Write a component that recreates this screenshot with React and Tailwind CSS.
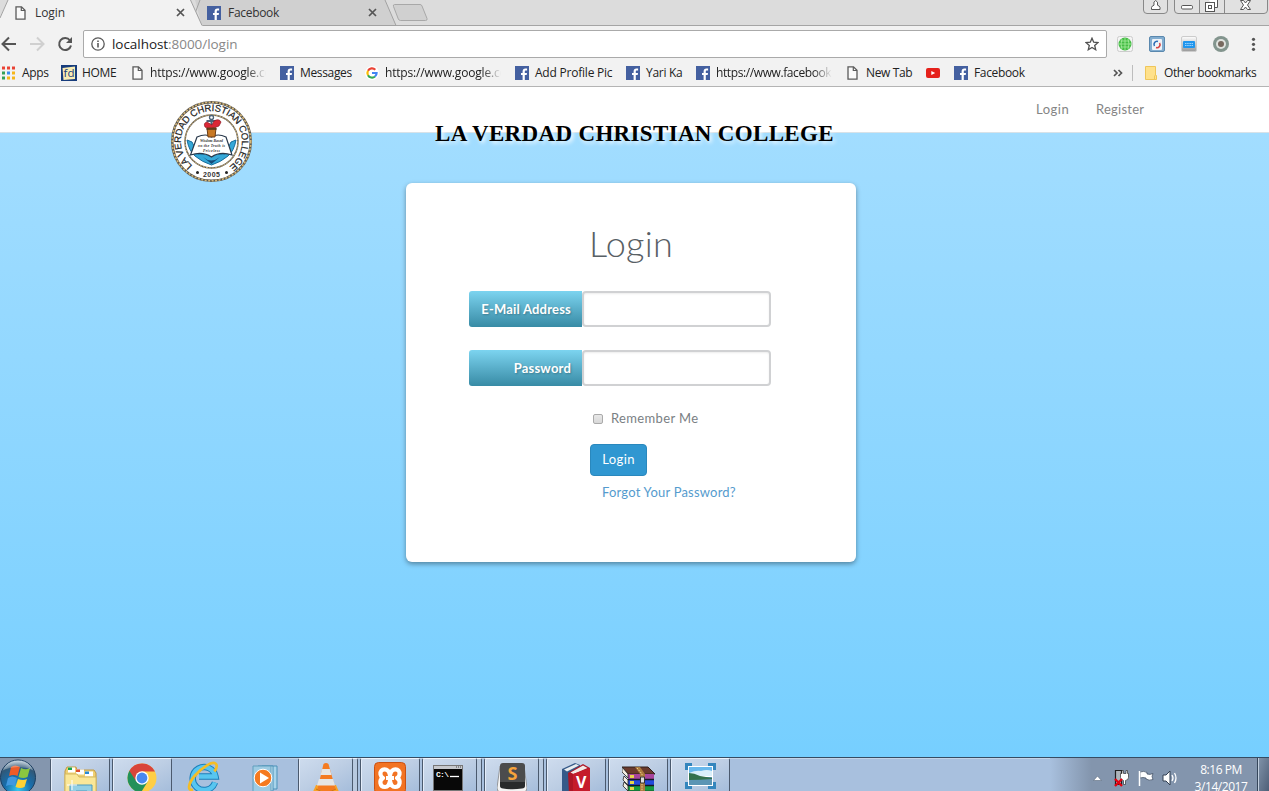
import React from "react";

const UI = "font-['Open_Sans','Noto_Sans',sans-serif]";
const WEB = "font-[Lato,'Open_Sans',sans-serif]";

function FacebookIcon() {
  return (
    <svg width="14" height="14" viewBox="0 0 14 14" className="shrink-0">
      <rect width="14" height="14" fill="#4460a0" />
      <path d="M7.6 14V8.9H6V6.9h1.6V5.4c0-1.9 1-2.9 2.8-2.9h1.7v2h-1.1c-.9 0-1.2.4-1.2 1.1v1.3H12l-.3 2H9.800V14z" fill="#fff" />
    </svg>
  );
}

function PageIcon() {
  return (
    <svg width="11" height="14" viewBox="0 0 11 14" className="shrink-0">
      <path d="M1 .8h5.500L10 4.300v8.900H1z" fill="#fafafa" stroke="#5a5a5a" strokeWidth="1.3" />
      <path d="M6.300 1v3.500H10" fill="none" stroke="#5a5a5a" strokeWidth="1.2" />
    </svg>
  );
}

function AppsIcon() {
  const colors = ["#ea4335", "#ea4335", "#ea4335", "#34a058", "#3b8df2", "#f6b619", "#34a058", "#f6b619", "#f6b619"];
  return (
    <svg width="15" height="14" viewBox="0 0 15 14" className="shrink-0">
      {colors.map((c, i) => (
        <rect key={i} x={1 + (i % 3) * 5} y={0.5 + Math.floor(i / 3) * 5} width="3" height="3" fill={c} />
      ))}
    </svg>
  );
}

function HomeIcon() {
  return (
    <svg width="16" height="16" viewBox="0 0 16 16" className="shrink-0">
      <rect width="16" height="16" fill="#173c7c" />
      <path d="M1.500 3L14 1.500v12.500L2.500 15z" fill="#f8edb4" />
      <text x="2.600" y="12.300" fontSize="11.500" fontFamily="Open Sans" fill="#173c7c" textLength="11">fd</text>
    </svg>
  );
}

function GoogleIcon() {
  return (
    <svg width="14" height="14" viewBox="0 0 14 14" className="shrink-0">
      <circle cx="7" cy="7" r="7" fill="#fff" />
      <g fill="none" strokeWidth="2.200">
        <path d="M3 4.800A4.600 4.600 0 0 1 10.300 3.700" stroke="#ea4335" />
        <path d="M3 9.200A4.600 4.600 0 0 1 3 4.800" stroke="#fbbc05" />
        <path d="M10 10.500A4.600 4.600 0 0 1 3 9.200" stroke="#34a853" />
        <path d="M7 7h4.600a4.600 4.600 0 0 1-1.600 3.500" stroke="#4285f4" />
      </g>
    </svg>
  );
}

function YoutubeIcon() {
  return (
    <svg width="14" height="10" viewBox="0 0 14 10" className="shrink-0">
      <rect width="14" height="10" rx="2" fill="#e5211b" />
      <path d="M5.300 2.900v4.200L9.200 5z" fill="#fff" />
    </svg>
  );
}

function CloseX() {
  return (
    <svg width="9" height="9" viewBox="0 0 9 9">
      <path d="M1 1l7 7M8 1L1 8" stroke="#555" strokeWidth="1.700" />
    </svg>
  );
}

function TabStrip() {
  return (
    <div className="relative flex h-[26px] bg-[#dcdcdc]">
      <svg className="absolute inset-0" width="1269" height="26" viewBox="0 0 1269 26">
        <path d="M0 25.500H1269" stroke="#a5a5a5" />
        <path d="M195 0h190l11 25.500H202z" fill="#d0d0d0" />
        <path d="M200 0l-4.500 12L202 25.500H396L385 0" fill="none" stroke="#a2a2a2" />
        <path d="M0 26V17L8 0h182.500l12 26z" fill="#f2f2f2" />
        <path d="M0 18L8 0M190.500 0L202 25.500" fill="none" stroke="#a2a2a2" />
        <path d="M394.500 4.500h25.500q1.500 0 2 1.500l5 12.500q.6 2-1.500 2h-25q-1.500 0-2.200-1.500l-4.800-12.500q-.6-2 1-2z" fill="#d0d0d0" stroke="#a8a8a8" />
        <g stroke="#888" fill="#e1e1e1">
          <path d="M1143.500 0v10q0 3.500 3.500 3.500h17q3.500 0 3.500-3.500V0" />
          <path d="M1174.500 0v10q0 3.500 3.500 3.500h86q3.500 0 3.500-3.500V0M1199.500 0v13.500M1224.500 0v13.500" />
        </g>
        <g fill="#fff" stroke="#555">
          <path d="M1151.500 9.500v-2q.5-1.800 2.500-2.300-1-3.700 1.700-4.700 2.700 1 1.800 4.700 2 .5 2.500 2.300v2z" />
          <rect x="1181.500" y="5.500" width="11" height="3.500" rx="1.200" />
          <path d="M1208.500-.5h9v8h-3" />
          <rect x="1205.500" y="2.500" width="9" height="9" />
          <rect x="1208.500" y="5.500" width="3" height="3" />
          <path d="M1240.500.5h3l2 2.500 2-2.500h3l-3 4.500 3 4.500h-3l-2-2.500-2 2.500h-3l3-4.500z" />
        </g>
      </svg>
      <div className="relative flex h-[25px] w-[206px] items-center pl-[15px]">
        <PageIcon />
        <span className="ml-[9px] w-[141px] text-[12px] tracking-[-0.1px] text-[#333]">Login</span>
        <CloseX />
      </div>
      <div className="relative flex h-[25px] w-[180px] items-center pl-[1px]">
        <FacebookIcon />
        <span className="ml-[7px] w-[140px] text-[12px] tracking-[-0.3px] text-[#333]">Facebook</span>
        <CloseX />
      </div>
    </div>
  );
}

function Toolbar() {
  return (
    <div className="flex h-[33px] items-start pt-[4px]">
      <svg width="83" height="28" viewBox="0 0 83 28" fill="none" strokeWidth="2">
        <path d="M16 14H3M9 7.500L2.500 14 9 20.500" stroke="#555" />
        <path d="M30 14H43M37 7.500l6.500 6.500L37 20.500" stroke="#d0d0d0" />
        <path d="M70 10.500A6 6 0 1 0 71 15.500" stroke="#555" />
        <path d="M72 7v6h-6z" fill="#555" />
      </svg>
      <div className="flex h-[28px] w-[1024px] items-center rounded-[2px] border border-[#aaa] bg-white pl-[7px]">
        <svg width="14" height="14" viewBox="0 0 14 14" fill="none" stroke="#5a5a5a">
          <circle cx="7" cy="7" r="6.200" strokeWidth="1.300" />
          <path d="M7 6v4.500M7 3.500v1.500" strokeWidth="1.600" />
        </svg>
        <div className="ml-[7px] w-[973px] text-[13.5px] tracking-[-0.05px] text-[#222]">
          localhost<span className="text-[#888]">:8000/login</span>
        </div>
        <svg width="14" height="14" viewBox="0 0 14 14">
          <path d="M7 1.200l1.700 4 4.300.4-3.300 2.800 1 4.300L7 10.400l-3.700 2.300 1-4.300L1 5.600l4.300-.4z" fill="none" stroke="#505050" strokeWidth="1.300" />
        </svg>
      </div>
      <svg width="162" height="28" viewBox="1107 30 162 28">
        <defs>
          <linearGradient id="gray" x1="0" y1="0" x2="0" y2="1"><stop stopColor="#fff" /><stop offset="1" stopColor="#999" /></linearGradient>
        </defs>
        <rect x="1117.500" y="36.500" width="15" height="15" rx="2" fill="#f4f4f4" stroke="#ccc" />
        <circle cx="1125" cy="44" r="6.500" fill="#45bd45" />
        <path d="M1119 44h12M1125 38v12M1120.500 41h9M1120.500 47h9M1122 39q-2 5 0 10M1128 39q2 5 0 10" stroke="#a8eda0" strokeWidth=".8" fill="none" />
        <rect x="1149.500" y="36.500" width="15" height="15" rx="1.500" fill="#82add0" stroke="#5a88ae" />
        <rect x="1152" y="39" width="10" height="11" rx="1" fill="#eef3f8" />
        <path d="M1158 41.500a3 3 0 0 0-3.500 4.500" fill="none" stroke="#2b6cb5" strokeWidth="1.600" />
        <path d="M1156 47.500a3 3 0 0 0 3.500-4.500" fill="none" stroke="#d64545" strokeWidth="1.600" />
        <rect x="1181.500" y="36.500" width="15" height="15" rx="1.500" fill="url(#gray)" stroke="#ccc" />
        <rect x="1183" y="41" width="12" height="7" rx="1" fill="#2196ed" />
        <path d="M1185 43.500h8M1185 45.500h8" stroke="#9bd4ff" strokeDasharray="1.500 .7" />
        <circle cx="1221" cy="44" r="8" fill="#83958e" />
        <circle cx="1221" cy="44" r="5" fill="#dfe3df" />
        <circle cx="1221" cy="44" r="3" fill="#77695f" />
        <g fill="#555"><circle cx="1253.500" cy="39.300" r="1.600" /><circle cx="1253.500" cy="44.300" r="1.600" /><circle cx="1253.500" cy="49.300" r="1.600" /></g>
      </svg>
    </div>
  );
}

function Bookmark({ icon, label, width, slot = "w-5", text = "", fade }) {
  return (
    <div className={`flex shrink-0 items-center ${width}`}>
      <div className={`flex shrink-0 items-center ${slot}`}>{icon}</div>
      {label && <span className={`whitespace-nowrap text-[12px] text-[#222] ${text} ${fade ? "w-[116px] overflow-hidden [mask-image:linear-gradient(to_right,#000_84%,transparent)]" : ""}`}>{label}</span>}
    </div>
  );
}

function BookmarksBar() {
  return (
    <div className="flex h-[28px] items-center border-b border-[#b4b4b4]">
      <Bookmark icon={<AppsIcon />} label="Apps" width="w-[61px] pl-[1px]" slot="w-[21px]" text="tracking-[-0.3px]" />
      <Bookmark icon={<HomeIcon />} label="HOME" width="w-[71px]" slot="w-[21px]" text="tracking-[-0.3px]" />
      <Bookmark icon={<PageIcon />} label="https://www.google.co" width="w-[148px]" slot="w-[18px]" fade text="tracking-[-0.18px]" />
      <Bookmark icon={<FacebookIcon />} label="Messages" width="w-[85px]" text="tracking-[-0.35px]" />
      <Bookmark icon={<GoogleIcon />} label="https://www.google.co" width="w-[150px]" fade text="tracking-[-0.18px]" />
      <Bookmark icon={<FacebookIcon />} label="Add Profile Pic" width="w-[111px]" text="tracking-[-0.22px]" />
      <Bookmark icon={<FacebookIcon />} label="Yari Ka" width="w-[70px]" text="tracking-[-0.3px]" />
      <Bookmark icon={<FacebookIcon />} label="https://www.facebook" width="w-[151px]" fade text="tracking-[-0.4px]" />
      <Bookmark icon={<PageIcon />} label="New Tab" width="w-[79px]" slot="w-[19px]" text="tracking-[-0.35px]" />
      <Bookmark icon={<YoutubeIcon />} label="" width="w-[28px]" />
      <Bookmark icon={<FacebookIcon />} label="Facebook" width="w-[159px]" text="tracking-[-0.35px]" />
      <svg width="19" height="14" viewBox="0 0 19 14" fill="none" stroke="#555" strokeWidth="1.700">
        <path d="M1 4l3 3-3 3M5.500 4l3 3-3 3" />
      </svg>
      <div className="h-[16px] w-px bg-[#bdbdbd]" />
      <div className="ml-[12px]">
        <Bookmark
          icon={<svg width="12" height="14" viewBox="0 0 12 14"><path d="M.5.5h10v9h1v4H.5z" fill="#ffe18b" stroke="#efc65a" /><path d="M9.500 13V9.500" stroke="#efc65a" /></svg>}
          label="Other bookmarks" width="w-[120px]" slot="w-[19px]" text="tracking-[-0.42px]" />
      </div>
    </div>
  );
}

function Seal() {
  return (
    <svg className="absolute left-[170px] top-[13px]" width="83" height="83" viewBox="0 0 83 83">
      <defs><path id="ring" d="M22.500 65.500A30.500 30.500 0 1 1 60.500 65.500" /></defs>
      <circle cx="41.500" cy="41.500" r="39.300" fill="#fff" stroke="#5d584f" strokeWidth="2.500" />
      <circle cx="41.500" cy="41.500" r="39.300" fill="none" stroke="#d6b878" strokeWidth="1.600" strokeDasharray="2 1.500" />
      <circle cx="41.500" cy="41.500" r="26.500" fill="#fff" stroke="#5d584f" strokeWidth="1.500" />
      <circle cx="41.500" cy="41.500" r="26.500" fill="none" stroke="#d9ba7b" strokeWidth="1" strokeDasharray="2 1" />
      <text fontFamily="Liberation Sans" fontSize="9.500" fill="#222" stroke="#222" strokeWidth=".2">
        <textPath href="#ring" textLength="152" lengthAdjust="spacing">LA VERDAD CHRISTIAN COLLEGE</textPath>
      </text>
      <text x="33" y="77" fontFamily="Liberation Sans" fontWeight="bold" fontSize="7" fill="#333" textLength="17">2005</text>
      <circle cx="27.500" cy="72.500" r="1.500" fill="#222" /><circle cx="56.500" cy="72.500" r="1.500" fill="#222" />
      <path d="M17 40q2 11 8 16 7 6 16.500 9 9.500-3 16.500-9 6-5 8-16l-5 2-6 12H28l-6-12z" fill="#35a8d8" stroke="#176d9c" />
      <path d="M33 57q8 7 17 0l-8.500 7z" fill="#174b78" />
      <path d="M27 37q9-4 14.500 0 6-4 14.500 0l6 18q-12-4-20.500 2-9-6-21-2z" fill="#fff" stroke="#29394b" strokeWidth="1.200" />
      <g fontFamily="Liberation Serif" fontWeight="bold" fontStyle="italic" fontSize="3.800" fill="#333">
        <text x="30" y="42" textLength="23">Wisdom Based</text><text x="28" y="47" textLength="27">on the Truth is</text><text x="33" y="52" textLength="17">Priceless</text>
      </g>
      <path d="M41.500 17v13M36.500 21h10" stroke="#4b6278" strokeWidth="2" />
      <circle cx="41.500" cy="17.500" r="2" fill="#fff" stroke="#4b6278" strokeWidth="1.300" />
      <path d="M35 27q-2-4 2-5l5 3 2-4q5-3 7 1l-2 4-5 2-5 1z" fill="#db2736" stroke="#8c1924" strokeWidth=".7" />
      <path d="M37 28h9l-1 9h-7z" fill="#c87924" stroke="#6c3d16" />
      <path d="M36.500 29h10" stroke="#503018" strokeWidth="1.500" />
    </svg>
  );
}

function Field({ label, type, tracking }) {
  return (
    <div className="flex h-[36px]">
      <label className={`flex w-[113px] items-center justify-end rounded-l-[3px] bg-linear-to-b from-[#7cd4f0] to-[#378ba5] pt-[2px] pr-[11px] text-[13px] font-bold whitespace-nowrap text-white [text-shadow:1px_1px_2px_rgba(0,0,0,.25)] ${tracking}`}>{label}</label>
      <input type={type} className="w-[189px] rounded-[4px] border-2 border-[#d0d1d3] bg-white shadow-[inset_0_1px_2px_rgba(0,0,0,.08)] outline-none" />
    </div>
  );
}

function LoginPage() {
  return (
    <main className={`relative h-[670px] bg-linear-to-b from-[#a5deff] to-[#76cfff] ${WEB}`}>
      <nav className="flex h-[46px] justify-end gap-[27px] border-b border-[#d8e2e8] bg-white pt-[12px] pr-[125px] text-[13px] leading-[20px] text-[#858585]">
        <a className="w-[33px] tracking-[0.5px] whitespace-nowrap">Login</a>
        <a className="w-[48px] tracking-[0.25px] whitespace-nowrap">Register</a>
      </nav>
      <Seal />
      <h1 className="absolute left-[435px] top-[34px] font-['Liberation_Serif',serif] text-[23px] leading-[26px] font-bold tracking-[0.33px] whitespace-nowrap text-black [text-shadow:2px_2px_4px_white]">LA VERDAD CHRISTIAN COLLEGE</h1>
      <section className="mt-[50px] ml-[406px] h-[379px] w-[450px] rounded-[6px] bg-white pt-[39px] pl-[63px] shadow-[0_2px_5px_rgba(0,0,0,.38)]">
        <h2 className="ml-[120px] h-[69px] text-[36px] leading-[42px] font-light tracking-[0.3px] text-[#586065]">Login</h2>
        <form>
          <div className="flex flex-col gap-[23px]">
            <Field label="E-Mail Address" type="email" tracking="tracking-[0.2px]" />
            <Field label="Password" type="password" tracking="tracking-[0.2px]" />
          </div>
          <div className="ml-[121px] flex flex-col items-start">
            <label className="mt-[23px] ml-[3px] flex h-[20px] items-center text-[13px] tracking-[0.35px] text-[#7a8084]">
              <span className="mr-[8px] size-[10px] rounded-[2px] border border-[#aaa] bg-linear-to-b from-[#e8e8e8] to-[#d8d8d8]" />
              Remember Me
            </label>
            <button type="button" className="mt-[15px] h-[32px] w-[57px] rounded-[4px] border border-[#2a88bd] bg-[#3097d1] text-[13px] tracking-[0.4px] text-white">Login</button>
            <a className="mt-[7px] ml-[12px] text-[13px] leading-[19px] tracking-[0.2px] text-[#559bce]">Forgot Your Password?</a>
          </div>
        </form>
      </section>
    </main>
  );
}

function FileExplorer() {
  return <svg width="34" height="34" viewBox="0 0 34 34"><path d="M2 8l2-4h9l1 3h17l2 3v24H2z" fill="#efd072" stroke="#c39b45" /><path d="M5 4.500h7v5H5zM13 6.500h8v5h-8zM22 8.500h8v5h-8z" fill="#fff" /><path d="M5 4.500h4v2.500H5z" fill="#18a34b" /><path d="M13 6.500h4v2.500h-4z" fill="#dd4e30" /><path d="M22 8.500h4v2.500h-4z" fill="#278ad6" /><path d="M2 11h12l2 3h17v20H2z" fill="#fae798" stroke="#d4b960" /><path d="M7 34V22h22v12h-5v-6H13v6z" fill="#93cfe4" stroke="#4d9bbe" /><path d="M9 17v10M4 22h10" stroke="#fff" /></svg>;
}

function Chrome() {
  return <svg width="30" height="30" viewBox="0 0 30 30"><circle cx="15" cy="15" r="14.500" fill="#ffce44" /><path d="M15 15L2.400 7.800A14.500 14.500 0 0 0 14 29.500L21 18z" fill="#22915a" /><path d="M2.400 7.800A14.500 14.500 0 0 1 28 8.500H15L9 18z" fill="#d9453a" /><circle cx="15" cy="15" r="6.700" fill="#fff" /><circle cx="15" cy="15" r="5.400" fill="#4788f0" /></svg>;
}

function InternetExplorer() {
  return (
    <svg width="34" height="32" viewBox="0 0 34 32">
      <path d="M28 21.500A11.500 11.500 0 1 1 28.500 15.500H12" fill="none" stroke="#1b7fba" strokeWidth="6.500" />
      <path d="M28 21.500A11.500 11.500 0 1 1 28.500 15.500H12" fill="none" stroke="#58c6f0" strokeWidth="4.500" />
      <path d="M6 28.500c-6 2-5-6 2-14S25 0 28.500 2.500c2 1.500 1 5-1 8" fill="none" stroke="#f4bd26" strokeWidth="2.700" />
    </svg>
  );
}

function MediaPlayer() {
  return <svg width="30" height="30" viewBox="0 0 30 30"><path d="M10 3h15v23H10z" fill="#a8d4eb" stroke="#4b91b8" /><path d="M6 3h15v25H6z" fill="#c9e6f3" stroke="#4b91b8" /><path d="M1 3h18v27H1z" fill="#9dcbe3" stroke="#619fbe" /><circle cx="11" cy="15" r="8.800" fill="#f57a20" stroke="#fff" /><path d="M8 9.500v11l9-5.500z" fill="#fff" /></svg>;
}

function Vlc() {
  return <svg width="28" height="32" viewBox="0 0 28 32"><path d="M4 23h20l4 9H0z" fill="#f8a124" /><path d="M11.500 2q2.500-2 5 0l7 25q-9 5-18 0z" fill="#f47b20" /><path d="M10.200 7h7.600l1.700 6H8.500zM7 17h14l2 6.500H5z" fill="#e5e6e4" /><path d="M4 27q10 6 20 0" fill="none" stroke="#cb7216" /></svg>;
}

function Xampp() {
  return <svg width="32" height="32" viewBox="0 0 32 32"><rect x=".5" y=".5" width="31" height="31" rx="4" fill="#f27323" stroke="#ca5113" /><path d="M16 13.500C15 5 5.500 6 6.500 12.500c.3 1.700 1 2.800 2.500 3.500-4 2-3.500 9 2 9 3.500 0 4.500-3 5-6.500.5 3.500 1.500 6.500 5 6.500 5.500 0 6-7 2-9 1.500-.7 2.200-1.800 2.500-3.500C26.500 6 17 5 16 13.500z" fill="none" stroke="#fff" strokeWidth="4.200" strokeLinejoin="round" /><path d="M12 16h8" stroke="#fff" strokeWidth="4" /></svg>;
}

function Terminal() {
  return <svg width="30" height="26" viewBox="0 0 30 26"><rect x=".5" y=".5" width="29" height="25" fill="#080808" stroke="#777" /><path d="M1 1h28v3H1z" fill="#c7c9cd" /><path d="M23 2h1M25 2h1M27 2h1" stroke="#444" /><text x="3" y="12" fill="#fff" fontFamily="Liberation Mono" fontWeight="bold" fontSize="8" textLength="13">C:\</text><path d="M17 11.500h9" stroke="#fff" strokeWidth="1.300" /></svg>;
}

function Sublime() {
  return <svg width="30" height="32" viewBox="0 0 30 32"><path d="M3 4h24l3 22q0 4-4 4.500-11 1.500-22 0Q0 30 0 26z" fill="#f3f3f3" stroke="#777" strokeWidth=".7" /><rect x="3" y="1" width="25" height="22" rx="3" fill="#4b4c4d" /><path d="M3 20l25 0v4q0 2-3 2.500-9.500 1.500-19 0-3-.5-3-2.500z" fill="#292a2b" /><text x="10.500" y="17.500" fill="#f6a33b" fontFamily="Open Sans" fontWeight="bold" fontSize="17" textLength="10" lengthAdjust="spacingAndGlyphs">S</text></svg>;
}

function RedBook() {
  return <svg width="30" height="33" viewBox="0 0 30 33"><path d="M1 8L14 2l5 2v24L6 33H1z" fill="#365a89" /><path d="M3 8.500L15 3l3 1.500-12 6z" fill="#e9edf0" /><path d="M7 12L22 3l7 4v26H8z" fill="#ae1626" /><path d="M9.500 11.500L22 4.500l4.500 2.500-14 6z" fill="#f1e9e6" /><path d="M12 13l17-6v26H12z" fill="#c51c2b" /><text x="15" y="27" fill="#fff" fontFamily="Open Sans" fontWeight="bold" fontSize="16">V</text></svg>;
}

function Winrar() {
  return (
    <svg width="33" height="27" viewBox="0 0 33 27">
      <path d="M0 1h26l7 7H6z" fill="#6b3a2c" stroke="#31201c" />
      <path d="M6 8h26v5H6z" fill="#a8449c" /><path d="M6 14h26v5H6z" fill="#234bdc" /><path d="M6 20h26v5H6z" fill="#159b3e" />
      <path d="M6 8L0 1v5l6 6zM6 14l-4-4-1 4 5 5zM6 20l-4-4-1 4 5 5z" fill="#f4ede0" stroke="#222" strokeWidth=".8" />
      <path d="M6 13.500h26M6 19.500h26M6 25.500h26" stroke="#141a26" strokeWidth="1.600" />
      <path d="M8 9h4v3H8zM8 15h4v3H8zM8 21h4v3H8z" fill="#e5d54b" />
      <path d="M13 1h5l5 7v17h-5V8z" fill="#a9783c" /><path d="M15 2l5 6v17" fill="none" stroke="#eed58c" strokeDasharray="1.500 1" />
      <path d="M18.500 11h4v6h-4z" fill="#ddd" stroke="#333" />
    </svg>
  );
}

function Photos() {
  return <svg width="31" height="26" viewBox="0 0 31 26"><rect x="3" y="3" width="25" height="20" fill="#fff" /><rect x="4" y="4" width="23" height="9" fill="#68b8ec" /><path d="M4 10q7-3 12-2 6-2 11 0v5H4z" fill="#d9effa" /><path d="M4 14h23v8H4z" fill="#5b95b4" /><path d="M4 10q5 0 11 3l12 2v1q-12 1-23 1z" fill="#33714d" /><path d="M1.500 7V1.500H7M23 1.500h6.500V7M29.500 19v5.500H23M7 24.500H1.500V19" fill="none" stroke="#3486bd" strokeWidth="3" /></svg>;
}

const tasks = [
  { icon: <FileExplorer />, kind: "open", pad: "pt-[4px]" },
  { icon: <Chrome />, kind: "open", pad: "pt-[4px]" },
  { icon: <InternetExplorer />, kind: "pinned", pad: "pt-[3px] pr-[2px]" },
  { icon: <MediaPlayer />, kind: "pinned", pad: "pt-[5px]" },
  { icon: <Vlc />, kind: "stacked", pad: "pt-[3px]" },
  { icon: <Xampp />, kind: "open", pad: "pt-[3px]" },
  { icon: <Terminal />, kind: "stacked", pad: "pt-[6px] pr-[4px]" },
  { icon: <Sublime />, kind: "stacked", pad: "pt-[3px]" },
  { icon: <RedBook />, kind: "open", pad: "pt-[2px]" },
  { icon: <Winrar />, kind: "open", pad: "pt-[7px]" },
  { icon: <Photos />, kind: "open", pad: "pt-[4px]" },
];

function TaskButton({ icon, kind, pad }) {
  if (kind === "pinned") return <div className={`flex h-[33px] w-[62px] shrink-0 justify-center overflow-hidden ${pad}`}>{icon}</div>;
  return (
    <div className="flex h-[33px] w-[62px] shrink-0 overflow-hidden pr-[2px]">
      <div className={`flex min-w-0 flex-1 justify-center rounded-t-[2px] border-x border-t border-x-[#4b5a6e] border-t-[#eef4fc] bg-linear-to-br from-[#cedcee] via-[#bdcee4] to-[#a5bddb] shadow-[inset_1px_0_0_#e4edfa] ${pad}`}>{icon}</div>
      {kind === "stacked" && <div className="w-[5px] rounded-tr-[2px] border-t border-r border-t-[#eef4fc] border-r-[#4b5a6e] bg-[#b7c9df]" />}
    </div>
  );
}

function Taskbar() {
  return (
    <footer className="flex h-[34px] overflow-hidden border-t border-[#354c63] bg-[#a8c0de] shadow-[inset_0_1px_0_#c4d4e8]">
      <div className="h-[33px] w-[50px] shrink-0 overflow-hidden bg-[#8496ae]">
        <svg width="50" height="33" viewBox="0 0 50 33">
          <defs><radialGradient id="orb" cx=".5" cy=".85" r=".85"><stop stopColor="#38c8ee" /><stop offset=".45" stopColor="#176dab" /><stop offset=".8" stopColor="#315877" /><stop offset="1" stopColor="#c9d9e5" /></radialGradient></defs>
          <circle cx="18" cy="19.500" r="17.500" fill="url(#orb)" stroke="#1c3e60" />
          <path d="M11 9q4-3 9 0l-2.500 9q-4-2-8.500 0z" fill="#ee5b28" />
          <path d="M21 10q5 2.500 9 0l-2.500 9q-4 2-9 0z" fill="#8bc640" />
          <path d="M8 20q4-3 9 0l-2.500 8q-4-2-8.500 0z" fill="#4198df" />
          <path d="M18 21q5 2 9 0l-2.500 8q-4 2-9 0z" fill="#ffd234" />
          <path d="M3 12Q8 2 18 2.500 28 2 33 12q-15-6-30 0z" fill="#fff" opacity=".28" />
        </svg>
      </div>
      <div className="flex w-[1000px] shrink-0">
        {tasks.map((task, i) => <TaskButton key={i} {...task} />)}
      </div>
      <div className="flex h-[33px] w-[207px] shrink-0 bg-linear-to-r from-[#a8c0de] via-[#8395ad] via-20% to-[#8395ad]">
        <svg width="135" height="33" viewBox="1050 758 135 33">
          <path d="M1093.500 780.500l4-4.500 4 4.500z" fill="#fff" stroke="#59687c" strokeWidth=".6" />
          <path d="M1115.500 770.500h6v14h-6z" fill="#aeb4ba" stroke="#202020" strokeWidth="1.200" />
          <path d="M1120.500 773.500h1.500v-3h1.500v3h2.500v-3h1.500v3h1v4q0 2.500-3 3v4h-2v-4q-3-.5-3-3z" fill="#fff" stroke="#333" strokeWidth=".7" />
          <path d="M1115 779l7 7M1122 779l-7 7" stroke="#e3000f" strokeWidth="2.300" />
          <path d="M1140 772q4-1.500 7 .5v1.500q3 1 6-.5l-1 3 1 3q-4 1.500-7-.5v-1q-3-1-6 0z" fill="#fff" stroke="#39485b" strokeWidth=".7" />
          <path d="M1139.500 771v15" stroke="#fff" strokeWidth="1.500" />
          <path d="M1163 775h3l4-4v14l-4-4h-3z" fill="#fff" stroke="#334052" />
          <path d="M1172 775q2 3 0 6M1174.500 773q3 5 0 10" fill="none" stroke="#fff" strokeWidth="1.300" />
        </svg>
        <div className="h-[33px] w-[72px] pt-[3px] text-center text-[12px] leading-[17px] tracking-[-0.45px] whitespace-nowrap text-white">
          <div>8:16 PM</div>
          <div>3/14/2017</div>
        </div>
      </div>
      <div className="h-[33px] w-[12px] shrink-0 border-l border-[#35465a] bg-linear-to-br from-[#8394aa] to-[#4e6078] shadow-[inset_1px_0_0_#c1cfdf]" />
    </footer>
  );
}

export default function App() {
  return (
    <div className={`h-[791px] w-[1269px] overflow-hidden bg-[#f2f2f2] ${UI}`}>
      <TabStrip />
      <Toolbar />
      <BookmarksBar />
      <LoginPage />
      <Taskbar />
    </div>
  );
}
